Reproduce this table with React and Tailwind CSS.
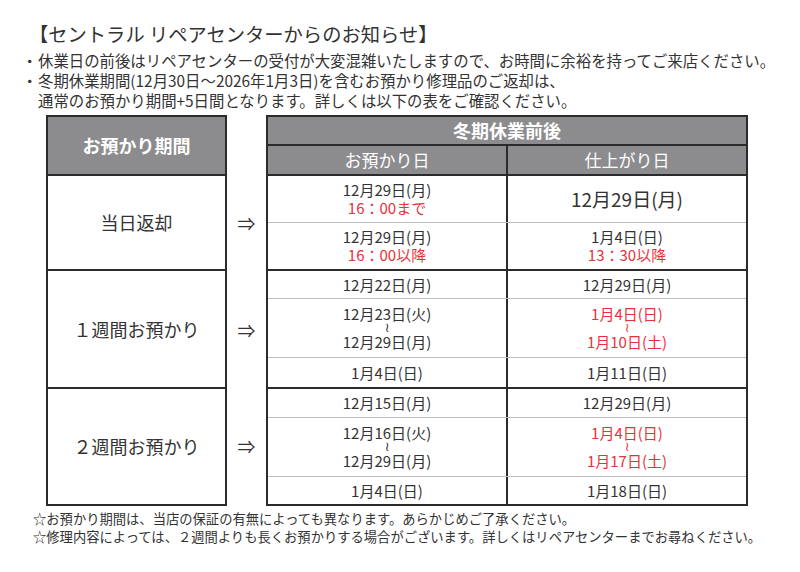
import React from "react";

// ─── Data ───────────────────────────────────────────────────────────────────
const FONT = "font-['Noto_Sans_CJK_JP','Noto_Sans',sans-serif]";
const RED = "text-[#e8313b]";

const GROUPS = [
  {
    label: "当日返却",
    height: "h-[95px]",
    rows: [
      {
        h: "h-[47px]",
        left: [{ t: "12月29日(月)" }, { t: "16：00まで", red: true }],
        right: [{ t: "12月29日(月)", big: true }],
      },
      {
        h: "h-[48px]",
        left: [{ t: "12月29日(月)" }, { t: "16：00以降", red: true }],
        right: [{ t: "1月4日(日)" }, { t: "13：30以降", red: true }],
      },
    ],
  },
  {
    label: "１週間お預かり",
    height: "h-[118px]",
    rows: [
      { h: "h-[28px]", left: [{ t: "12月22日(月)" }], right: [{ t: "12月29日(月)" }] },
      {
        h: "h-[59px]",
        left: [{ t: "12月23日(火)" }, { tilde: true }, { t: "12月29日(月)" }],
        right: [{ t: "1月4日(日)", red: true }, { tilde: true, red: true }, { t: "1月10日(土)", red: true }],
      },
      { h: "h-[31px]", left: [{ t: "1月4日(日)" }], right: [{ t: "1月11日(日)" }] },
    ],
  },
  {
    label: "２週間お預かり",
    height: "h-[115px]",
    rows: [
      { h: "h-[29px]", left: [{ t: "12月15日(月)" }], right: [{ t: "12月29日(月)" }] },
      {
        h: "h-[59px]",
        left: [{ t: "12月16日(火)" }, { tilde: true }, { t: "12月29日(月)" }],
        right: [{ t: "1月4日(日)", red: true }, { tilde: true, red: true }, { t: "1月17日(土)", red: true }],
      },
      { h: "h-[27px]", left: [{ t: "1月4日(日)" }], right: [{ t: "1月18日(日)" }] },
    ],
  },
];

// ─── Cell content ───────────────────────────────────────────────────────────
function Lines({ items }) {
  return (
    <div className="flex flex-col items-center">
      {items.map((it, i) => {
        if (it.tilde) {
          // small vertical wave between two dates
          return (
            <span
              key={i}
              className={`h-[10px] text-[13px] leading-[10px] font-['DejaVu_Sans',sans-serif] ${it.red ? RED : ""}`}
            >
              ≀
            </span>
          );
        }
        return (
          <span
            key={i}
            className={`${it.big ? "text-[19px] leading-[22px]" : "text-[15px] leading-[18px]"} ${it.red ? RED : ""}`}
          >
            {it.t}
          </span>
        );
      })}
    </div>
  );
}

// ─── Page ───────────────────────────────────────────────────────────────────
export default function App() {
  return (
    <div className={`w-[800px] h-[572px] bg-white text-[#333] ${FONT}`}>
      {/* Heading */}
      <div className="pt-[22px] pl-[29px] text-[19.3px] leading-[24px]">
        【セントラル リペアセンターからのお知らせ】
      </div>

      {/* Notes */}
      <div className="mt-[4px] pl-[22px] text-[15.4px] leading-[20px]">
        <div className="flex">
          <span className="w-[16px] shrink-0">・</span>
          <span>休業日の前後はリペアセンターの受付が大変混雑いたしますので、お時間に余裕を持ってご来店ください。</span>
        </div>
        <div className="flex">
          <span className="w-[16px] shrink-0">・</span>
          <span>
            冬期休業期間(12月30日〜2026年1月3日)を含むお預かり修理品のご返却は、
            <br />
            通常のお預かり期間+5日間となります。詳しくは以下の表をご確認ください。
          </span>
        </div>
      </div>

      {/* Tables */}
      <div className="mt-[5px] ml-[46px] flex">
        {/* Left: period */}
        <div className="w-[181px] border-2 border-[#2b2b2b] flex flex-col">
          <div className="h-[59px] bg-[#8c8c8e] border-b-2 border-[#2b2b2b] flex items-center justify-center text-white text-[18px] font-bold">
            お預かり期間
          </div>
          {GROUPS.map((g, i) => (
            <div
              key={g.label}
              className={`${g.height} flex items-center justify-center text-[18px] ${i < GROUPS.length - 1 ? "border-b-2 border-[#2b2b2b]" : ""}`}
            >
              {g.label}
            </div>
          ))}
        </div>

        {/* Arrows */}
        <div className="w-[39px] flex flex-col pt-[61px]">
          {GROUPS.map((g) => (
            <div key={g.label} className={`${g.height} flex items-center justify-center text-[18px]`}>
              ⇒
            </div>
          ))}
        </div>

        {/* Right: winter holiday */}
        <div className="w-[482px] border-2 border-[#2b2b2b] flex flex-col">
          <div className="h-[29px] bg-[#8c8c8e] border-b-2 border-[#2b2b2b] flex items-center justify-center text-white text-[18px] font-bold">
            冬期休業前後
          </div>
          <div className="h-[30px] bg-[#8c8c8e] border-b-2 border-[#2b2b2b] grid grid-cols-[240px_1fr] text-white text-[17px]">
            <div className="border-r-2 border-[#2b2b2b] flex items-center justify-center">お預かり日</div>
            <div className="flex items-center justify-center">仕上がり日</div>
          </div>
          {GROUPS.map((g, gi) =>
            g.rows.map((r, ri) => {
              const lastInGroup = ri === g.rows.length - 1;
              const lastAll = gi === GROUPS.length - 1 && lastInGroup;
              const line = lastAll
                ? ""
                : lastInGroup
                  ? "border-b-2 border-[#2b2b2b]"
                  : "border-b border-[#bdbdbd]";
              return (
                <div key={`${gi}-${ri}`} className={`${r.h} ${line} grid grid-cols-[240px_1fr]`}>
                  <div className="border-r-2 border-[#2b2b2b] flex items-center justify-center">
                    <Lines items={r.left} />
                  </div>
                  <div className="flex items-center justify-center">
                    <Lines items={r.right} />
                  </div>
                </div>
              );
            })
          )}
        </div>
      </div>

      {/* Footnotes */}
      <div className="mt-[4px] pl-[33px] text-[13.3px] leading-[18px]">
        <div>☆お預かり期間は、当店の保証の有無によっても異なります。あらかじめご了承ください。</div>
        <div>☆修理内容によっては、２週間よりも長くお預かりする場合がございます。詳しくはリペアセンターまでお尋ねください。</div>
      </div>
    </div>
  );
}
